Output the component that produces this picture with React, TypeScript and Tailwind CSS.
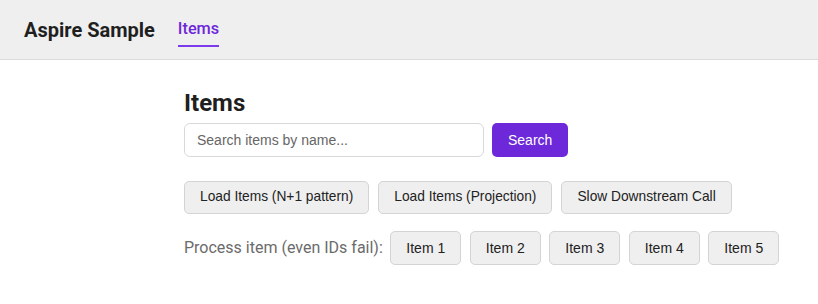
export default function App() {
  const items = [1, 2, 3, 4, 5];
  return (
    <div className="min-h-screen bg-white font-['Roboto',sans-serif] text-[#1f1f1f]">
      {/* Header */}
      <header className="h-[60px] bg-[#efefef] border-b border-[#dcdcdc] flex items-center px-6">
        <span className="text-[20px] font-bold">Aspire Sample</span>
        <nav className="ml-[23px] flex h-full">
          <a className="relative flex items-center text-[16.3px] font-medium text-[#6d28d9]">
            Items
            <span className="absolute left-0 right-0 top-[45px] h-[2px] bg-[#7c3aed]" />
          </a>
        </nav>
      </header>

      <main className="ml-[184px] pt-[28px]">
        <h1 className="text-[24px] font-bold leading-[30px]">Items</h1>

        <div className="mt-[5px] flex gap-2">
          <input
            placeholder="Search items by name..."
            className="w-[300px] h-[34px] rounded-[6px] border border-[#d9d9d9] px-3 text-[14px] font-['Liberation_Sans',sans-serif] placeholder:text-[#666] outline-none"
          />
          <button className="h-[34px] px-4 rounded-[5px] bg-[#6d28d9] text-white text-[14px] font-['Liberation_Sans',sans-serif]">
            Search
          </button>
        </div>

        <div className="mt-[24px] flex gap-[9px]">
          {['Load Items (N+1 pattern)', 'Load Items (Projection)', 'Slow Downstream Call'].map(t => (
            <button
              key={t}
              className="h-[33px] px-[15px] rounded-[5px] border border-[#d4d4d4] bg-[#efefef] text-[13.75px] text-[#222] font-['Liberation_Sans',sans-serif]"
            >
              {t}
            </button>
          ))}
        </div>

        <div className="mt-[17px] flex items-center gap-[8.5px]">
          <span className="text-[16px] text-[#6b6b6b] mr-[-1px]">Process item (even IDs fail):</span>
          {items.map(i => (
            <button
              key={i}
              className="h-[34px] w-[71px] rounded-[5px] border border-[#d4d4d4] bg-[#efefef] text-[14px] text-[#222] font-['Liberation_Sans',sans-serif]"
            >
              Item {i}
            </button>
          ))}
        </div>
      </main>
    </div>
  );
}
